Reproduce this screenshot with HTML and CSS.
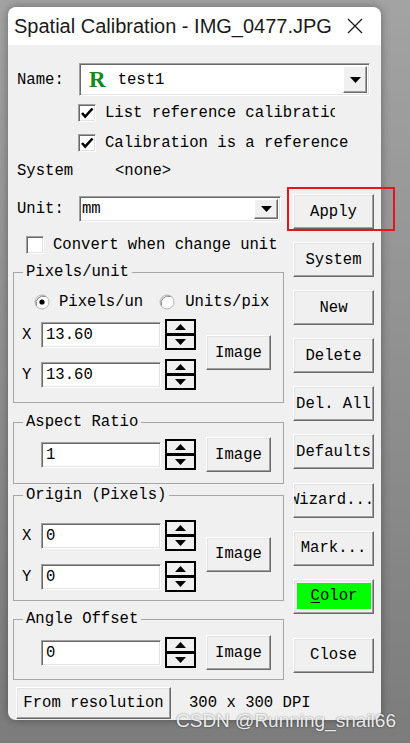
FILE: index.html
```html
<!DOCTYPE html>
<html lang="en">
<head>
    <meta charset="UTF-8">
    <title>Spatial Calibration</title>
    <link rel="stylesheet" href="styles.css">
</head>
<body>
<div class="window">
    <div class="titlebar">
        <span class="title">Spatial Calibration - IMG_0477.JPG</span>
        <svg class="close" width="16" height="16" viewBox="0 0 16 16"><path d="M1 1L15 15M15 1L1 15" stroke="#1a1a1a" stroke-width="1.3" fill="none"/></svg>
    </div>
    <div class="client">
        <div class="name-row">
            <span class="lbl">Name:</span>
            <div class="combo name-combo">
                <span class="combo-text"><b class="ref">R</b>test1</span>
                <span class="drop"><svg width="11" height="6" viewBox="0 0 11 6"><path d="M0 0h11L5.5 6z"/></svg></span>
            </div>
        </div>
        <div class="check-row first">
            <span class="box"><svg width="14" height="14" viewBox="0 0 14 14"><path d="M2 7l3.2 3.6L12.5 2.5" fill="none" stroke="#000" stroke-width="2.6"/></svg></span>
            <span class="check-text clip">List reference calibration</span>
        </div>
        <div class="check-row second">
            <span class="box"><svg width="14" height="14" viewBox="0 0 14 14"><path d="M2 7l3.2 3.6L12.5 2.5" fill="none" stroke="#000" stroke-width="2.6"/></svg></span>
            <span class="check-text">Calibration is a reference</span>
        </div>
        <div class="system-row">
            <span class="lbl wide">System</span>
            <span>&lt;none&gt;</span>
        </div>

        <div class="main">
            <div class="left">
                <div class="unit-row">
                    <span class="lbl">Unit:</span>
                    <div class="combo unit-combo">
                        <span class="combo-text">mm</span>
                        <span class="drop"><svg width="11" height="6" viewBox="0 0 11 6"><path d="M0 0h11L5.5 6z"/></svg></span>
                    </div>
                </div>
                <div class="check-row convert">
                    <span class="box"></span>
                    <span class="check-text">Convert when change unit</span>
                </div>

                <fieldset class="group pixels">
                    <legend>Pixels/unit</legend>
                    <div class="group-body">
                        <div class="radios">
                            <span class="radio"><svg width="16" height="16" viewBox="0 0 16 16"><circle cx="8" cy="8" r="7" fill="#fff" stroke="#b4b4b4"/><path d="M2.5 11.5A7 7 0 0 1 11.5 2.5" stroke="#7a7a7a" fill="none"/><circle cx="8" cy="8" r="2.6"/></svg></span>
                            <span class="radio-text">Pixels/un</span>
                            <span class="radio second-radio"><svg width="16" height="16" viewBox="0 0 16 16"><circle cx="8" cy="8" r="7" fill="#fff" stroke="#b4b4b4"/><path d="M2.5 11.5A7 7 0 0 1 11.5 2.5" stroke="#7a7a7a" fill="none"/></svg></span>
                            <span class="radio-text">Units/pix</span>
                        </div>
                        <div class="coords">
                            <div class="xy">
                                <div class="xy-row">
                                    <span class="axis">X</span>
                                    <span class="field">13.60</span>
                                    <svg class="spin" width="31" height="31" viewBox="0 0 31 31"><rect x="1" y="1" width="29" height="14" fill="#f0f0f0" stroke="#000" stroke-width="2"/><rect x="1" y="16" width="29" height="14" fill="#f0f0f0" stroke="#000" stroke-width="2"/><path d="M10 11h11l-5.5-6z"/><path d="M10 20h11l-5.5 6z"/></svg>
                                </div>
                                <div class="xy-row">
                                    <span class="axis">Y</span>
                                    <span class="field">13.60</span>
                                    <svg class="spin" width="31" height="31" viewBox="0 0 31 31"><rect x="1" y="1" width="29" height="14" fill="#f0f0f0" stroke="#000" stroke-width="2"/><rect x="1" y="16" width="29" height="14" fill="#f0f0f0" stroke="#000" stroke-width="2"/><path d="M10 11h11l-5.5-6z"/><path d="M10 20h11l-5.5 6z"/></svg>
                                </div>
                            </div>
                            <button class="btn image lift">Image</button>
                        </div>
                    </div>
                </fieldset>

                <fieldset class="group aspect">
                    <legend>Aspect Ratio</legend>
                    <div class="group-body">
                        <div class="single">
                            <span class="axis"></span>
                            <span class="field">1</span>
                            <svg class="spin" width="31" height="31" viewBox="0 0 31 31"><rect x="1" y="1" width="29" height="14" fill="#f0f0f0" stroke="#000" stroke-width="2"/><rect x="1" y="16" width="29" height="14" fill="#f0f0f0" stroke="#000" stroke-width="2"/><path d="M10 11h11l-5.5-6z"/><path d="M10 20h11l-5.5 6z"/></svg>
                            <button class="btn image">Image</button>
                        </div>
                    </div>
                </fieldset>

                <fieldset class="group origin">
                    <legend>Origin (Pixels)</legend>
                    <div class="group-body">
                        <div class="coords">
                            <div class="xy">
                                <div class="xy-row">
                                    <span class="axis">X</span>
                                    <span class="field">0</span>
                                    <svg class="spin" width="31" height="31" viewBox="0 0 31 31"><rect x="1" y="1" width="29" height="14" fill="#f0f0f0" stroke="#000" stroke-width="2"/><rect x="1" y="16" width="29" height="14" fill="#f0f0f0" stroke="#000" stroke-width="2"/><path d="M10 11h11l-5.5-6z"/><path d="M10 20h11l-5.5 6z"/></svg>
                                </div>
                                <div class="xy-row">
                                    <span class="axis">Y</span>
                                    <span class="field">0</span>
                                    <svg class="spin" width="31" height="31" viewBox="0 0 31 31"><rect x="1" y="1" width="29" height="14" fill="#f0f0f0" stroke="#000" stroke-width="2"/><rect x="1" y="16" width="29" height="14" fill="#f0f0f0" stroke="#000" stroke-width="2"/><path d="M10 11h11l-5.5-6z"/><path d="M10 20h11l-5.5 6z"/></svg>
                                </div>
                            </div>
                            <button class="btn image lift">Image</button>
                        </div>
                    </div>
                </fieldset>

                <fieldset class="group angle">
                    <legend>Angle Offset</legend>
                    <div class="group-body">
                        <div class="single">
                            <span class="axis"></span>
                            <span class="field">0</span>
                            <svg class="spin" width="31" height="31" viewBox="0 0 31 31"><rect x="1" y="1" width="29" height="14" fill="#f0f0f0" stroke="#000" stroke-width="2"/><rect x="1" y="16" width="29" height="14" fill="#f0f0f0" stroke="#000" stroke-width="2"/><path d="M10 11h11l-5.5-6z"/><path d="M10 20h11l-5.5 6z"/></svg>
                            <button class="btn image">Image</button>
                        </div>
                    </div>
                </fieldset>
            </div>

            <div class="right">
                <div class="apply-wrap">
                    <button class="btn">Apply</button>
                    <span class="mark"></span>
                </div>
                <button class="btn">System</button>
                <button class="btn">New</button>
                <button class="btn">Delete</button>
                <button class="btn">Del. All</button>
                <button class="btn">Defaults</button>
                <button class="btn wiz"><span>Wizard...</span></button>
                <button class="btn">Mark...</button>
                <button class="btn color"><span class="swatch"><u>C</u>olor</span></button>
                <button class="btn close-btn">Close</button>
            </div>
        </div>

        <div class="bottom-row">
            <button class="btn from">From resolution</button>
            <span class="dpi">300 x 300 DPI</span>
        </div>
    </div>
</div>
<div class="watermark">CSDN @Running_snail66</div>
</body>
</html>
```

FILE: styles.css
```css
*{
    box-sizing: border-box;
}
body{
    margin: 0;
    padding: 7px 0 0 8px;
    width: 410px;
    height: 743px;
    overflow: hidden;
    position: relative;
    background: linear-gradient(180deg, #a3a3a3, #7c7c7c);
    font-family: "Liberation Mono", monospace;
    font-size: 15.6px;
    line-height: 20px;
    color: #000;
}
.window{
    width: 373px;
    border-radius: 8px;
    box-shadow: 0 0 10px rgba(0, 0, 0, .35);
}
.titlebar{
    height: 38px;
    background: #fff;
    border-radius: 8px 8px 0 0;
    display: flex;
    align-items: center;
    justify-content: space-between;
    padding: 0 18px 0 6px;
    font-family: "Liberation Sans", sans-serif;
    font-size: 20px;
    color: #1a1a1a;
}
.client{
    height: 675px;
    background: #f0f0f0;
    border-radius: 0 0 8px 8px;
    padding-top: 18px;
}
.lbl{
    width: 62px;
    flex: none;
}
.lbl.wide{
    width: 98px;
}
.name-row{
    display: flex;
    align-items: center;
    height: 33px;
    padding-left: 9px;
}
.combo{
    display: flex;
    align-items: stretch;
    background: #fff;
    border: 1px solid;
    border-color: #a0a0a0 #fff #fff #a0a0a0;
    box-shadow: inset 1px 1px 0 #696969, inset -1px -1px 0 #e3e3e3;
    padding: 2px;
}
.combo-text{
    flex: 1;
    display: flex;
    align-items: center;
    white-space: nowrap;
}
.name-combo{
    width: 291px;
    height: 33px;
}
.name-combo .combo-text{
    padding-left: 7px;
}
.ref{
    font-family: "Liberation Serif", serif;
    font-size: 23px;
    color: #15891a;
    margin-right: 12px;
}
.drop{
    width: 24px;
    flex: none;
    display: flex;
    align-items: center;
    justify-content: center;
    background: #f0f0f0;
    border: 1px solid;
    border-color: #fff #696969 #696969 #fff;
    box-shadow: inset -1px -1px 0 #a0a0a0;
}
.unit-combo{
    width: 202px;
    height: 26px;
}
.check-row{
    display: flex;
    align-items: center;
    padding-left: 70px;
}
.check-row.first{
    margin-top: 2px;
    height: 30px;
}
.check-row.second{
    height: 29px;
}
.box{
    width: 18px;
    height: 18px;
    flex: none;
    margin-right: 9px;
    display: flex;
    align-items: center;
    justify-content: center;
    background: #fff;
    border: 1px solid;
    border-color: #a0a0a0 #fff #fff #a0a0a0;
    box-shadow: inset 1px 1px 0 #696969, inset -1px -1px 0 #e3e3e3;
}
.check-text{
    white-space: nowrap;
}
.clip{
    width: 230px;
    overflow: hidden;
}
.system-row{
    display: flex;
    align-items: center;
    height: 28px;
    padding-left: 9px;
}
.main{
    display: flex;
    margin-top: 9px;
}
.left{
    width: 271px;
    margin-left: 5px;
}
.unit-row{
    display: flex;
    align-items: center;
    height: 30px;
    padding-left: 4px;
}
.unit-combo .combo-text{
    padding-left: 0;
}
.check-row.convert{
    margin-top: 7px;
    height: 28px;
    padding-left: 13px;
}
.group{
    margin: 0;
    padding: 0;
    min-width: 0;
    border: 1px solid #a6a6a6;
}
.group legend{
    margin-left: 9px;
    padding: 0 3px;
    line-height: 20px;
}
.group-body{
    padding-left: 8px;
}
.pixels{
    margin-top: 3px;
}
.pixels .group-body{
    padding-top: 6px;
    padding-bottom: 12px;
}
.aspect{
    margin-top: 9px;
}
.aspect .group-body{
    padding-top: 5px;
    padding-bottom: 11px;
}
.origin{
    margin-top: 1px;
}
.origin .group-body{
    padding-top: 12px;
    padding-bottom: 8px;
}
.origin .xy{
    gap: 10px;
}
.angle{
    margin-top: 8px;
}
.angle .group-body{
    padding-top: 6px;
    padding-bottom: 9px;
}
.radios{
    display: flex;
    align-items: center;
    height: 28px;
    padding-left: 12px;
}
.radio{
    display: flex;
    margin-right: 9px;
}
.second-radio{
    margin-left: 16px;
    margin-right: 10px;
}
.radio-text{
    white-space: nowrap;
}
.coords{
    display: flex;
    align-items: center;
    margin-top: 3px;
}
.xy{
    display: flex;
    flex-direction: column;
    gap: 9px;
}
.xy-row,.single{
    display: flex;
    align-items: center;
    height: 31px;
}
.single{
    height: 35px;
}
.axis{
    width: 19px;
    flex: none;
}
.field{
    width: 120px;
    height: 26px;
    flex: none;
    display: flex;
    align-items: center;
    padding-left: 4px;
    background: #fff;
    border: 1px solid;
    border-color: #a0a0a0 #fff #fff #a0a0a0;
    box-shadow: inset 1px 1px 0 #696969, inset -1px -1px 0 #e3e3e3;
}
.spin{
    margin-left: 4px;
    flex: none;
}
.btn{
    display: flex;
    align-items: center;
    justify-content: center;
    height: 35px;
    padding: 0;
    margin: 0;
    background: #f0f0f0;
    border: 1px solid;
    border-color: #fff #696969 #696969 #fff;
    box-shadow: inset -1px -1px 0 #a0a0a0, inset 1px 1px 0 #e3e3e3;
    font: inherit;
    color: #000;
    white-space: nowrap;
    overflow: hidden;
}
.image{
    width: 65px;
    margin-left: 10px;
    flex: none;
}
.image.lift{
    margin-bottom: 4px;
}
.right{
    width: 81px;
    margin-left: 9px;
    display: flex;
    flex-direction: column;
    gap: 13.1px;
}
.right .btn{
    width: 81px;
}
.btn.wiz{
    justify-content: flex-start;
}
.wiz span{
    margin-left: -4px;
    flex: none;
}
.apply-wrap{
    position: relative;
}
.mark{
    position: absolute;
    left: -6px;
    top: -7px;
    width: 108px;
    height: 44px;
    border: 2px solid #e5141e;
}
.color{
    padding: 3px 2px 4px 3px;
}
.swatch{
    flex: 1;
    align-self: stretch;
    display: flex;
    align-items: center;
    justify-content: center;
    background: #00ff00;
}
.swatch u{
    text-underline-offset: 2px;
}
.close-btn{
    margin-top: 11.1px;
}
.bottom-row{
    display: flex;
    align-items: center;
    margin-top: 7px;
    padding-left: 8px;
}
.from{
    width: 155px;
    height: 32px;
}
.dpi{
    margin-left: 18px;
}
.watermark{
    position: absolute;
    left: 176px;
    top: 711px;
    font-family: "Liberation Sans", sans-serif;
    font-size: 19px;
    color: rgba(255, 255, 255, .9);
    text-shadow: 0 0 2px rgba(0, 0, 0, .55);
}
```
